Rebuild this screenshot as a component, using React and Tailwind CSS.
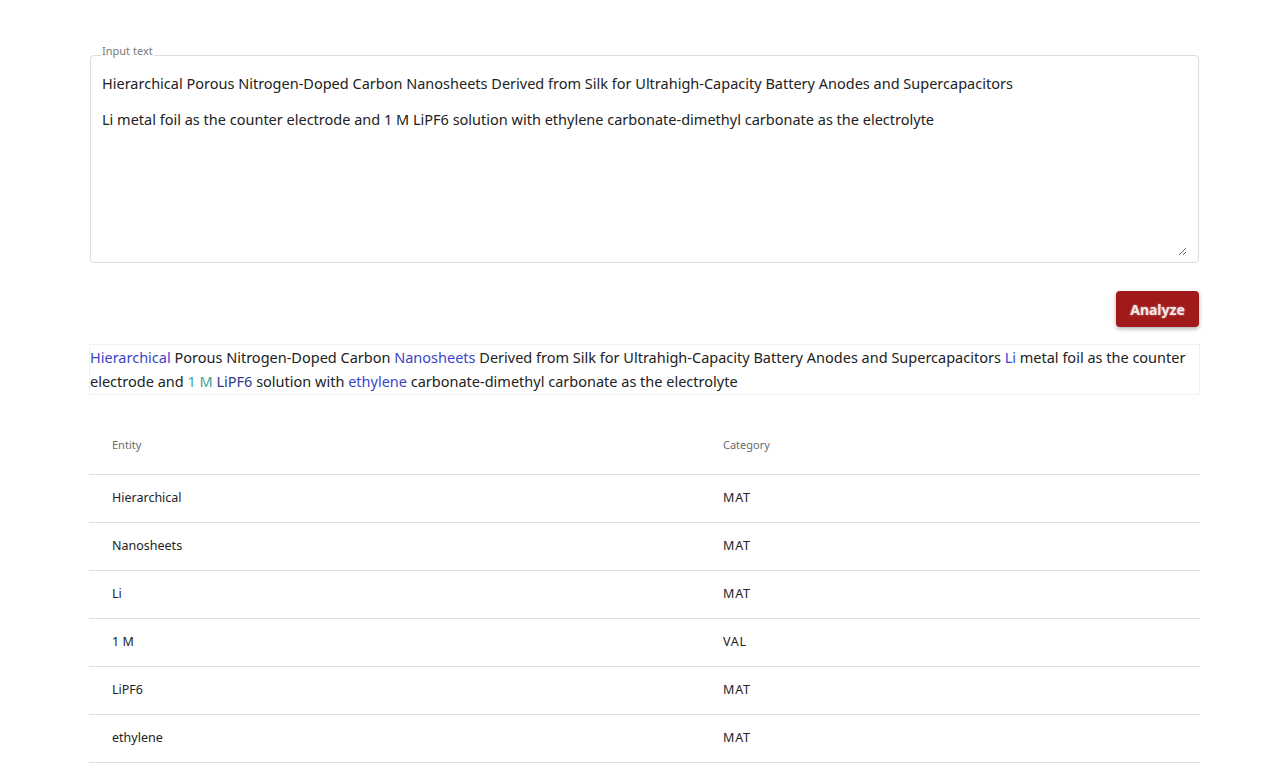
import React from "react";

const rows = [
  { entity: "Hierarchical", category: "MAT" },
  { entity: "Nanosheets", category: "MAT" },
  { entity: "Li", category: "MAT" },
  { entity: "1 M", category: "VAL" },
  { entity: "LiPF6", category: "MAT" },
  { entity: "ethylene", category: "MAT" },
];

const blue = "text-[#3a45c8]";
const teal = "text-[#3fa39a]";

const App = () => {
  return (
    <div
      className="min-h-screen bg-white text-[#222]"
      style={{ fontFamily: '"Noto Sans", "Open Sans", sans-serif' }}
    >
      <div className="ml-[89px] w-[1111px] pt-[45px]">
        {/* Input area */}
        <fieldset className="relative mx-[1px] rounded-[4px] border border-[#dcdcdc] px-[11px] pb-[6px] pt-0">
          <legend className="ml-[-1px] px-[1px] pb-[8px] text-[11px] leading-[12px] text-[#7a7a7a]">
            Input text
          </legend>
          <textarea
            className="block h-[191px] w-full resize-y pt-[9px] text-[14.5px] leading-[18px] text-[#222] outline-none"
            style={{ fontFamily: '"Noto Sans", "Open Sans", sans-serif' }}
            defaultValue={
              "Hierarchical Porous Nitrogen-Doped Carbon Nanosheets Derived from Silk for Ultrahigh-Capacity Battery Anodes and Supercapacitors\n\nLi metal foil as the counter electrode and 1 M LiPF6 solution with ethylene carbonate-dimethyl carbonate as the electrolyte"
            }
          />
        </fieldset>

        <div className="mt-[28px] flex justify-end pr-[1px]">
          <button
            className="h-[36px] w-[83px] rounded-[4px] bg-[#a11a1a] text-[14px] font-bold text-[#f3e6e6] shadow-[0_2px_4px_rgba(0,0,0,0.3)]"
            style={{ textShadow: "0 0 2px rgba(255,255,255,0.6)" }}
          >
            Analyze
          </button>
        </div>

        {/* Highlighted output */}
        <div className="mt-[17px] border border-[#f0f0f0] pb-[1px] text-[14.5px] leading-[24px]">
          <span className={blue}>Hierarchical</span> Porous Nitrogen-Doped Carbon{" "}
          <span className={blue}>Nanosheets</span> Derived from Silk for Ultrahigh-Capacity Battery Anodes and
          Supercapacitors <span className={blue}>Li</span> metal foil as the counter electrode and{" "}
          <span className={teal}>1 M</span> <span className="text-[#2c3a8e]">LiPF6</span> solution with{" "}
          <span className={blue}>ethylene</span> carbonate-dimethyl carbonate as the electrolyte
        </div>

        {/* Table */}
        <table className="mt-[25px] w-full border-collapse text-left">
          <thead>
            <tr className="h-[54px] border-b border-[#e0e0e0]">
              <th className="w-[611px] pb-[4px] pl-[23px] text-[11px] font-normal text-[#6b6b6b]">Entity</th>
              <th className="pb-[4px] pl-[23px] text-[11px] font-normal text-[#6b6b6b]">Category</th>
            </tr>
          </thead>
          <tbody>
            {rows.map((r) => (
              <tr key={r.entity} className="h-[48px] border-b border-[#e0e0e0]">
                <td className="pl-[23px] text-[12.5px] text-[#222]">{r.entity}</td>
                <td className="pl-[23px] text-[12.5px] tracking-[0.8px] text-[#222]">{r.category}</td>
              </tr>
            ))}
          </tbody>
        </table>
      </div>
    </div>
  );
};

export default App;
